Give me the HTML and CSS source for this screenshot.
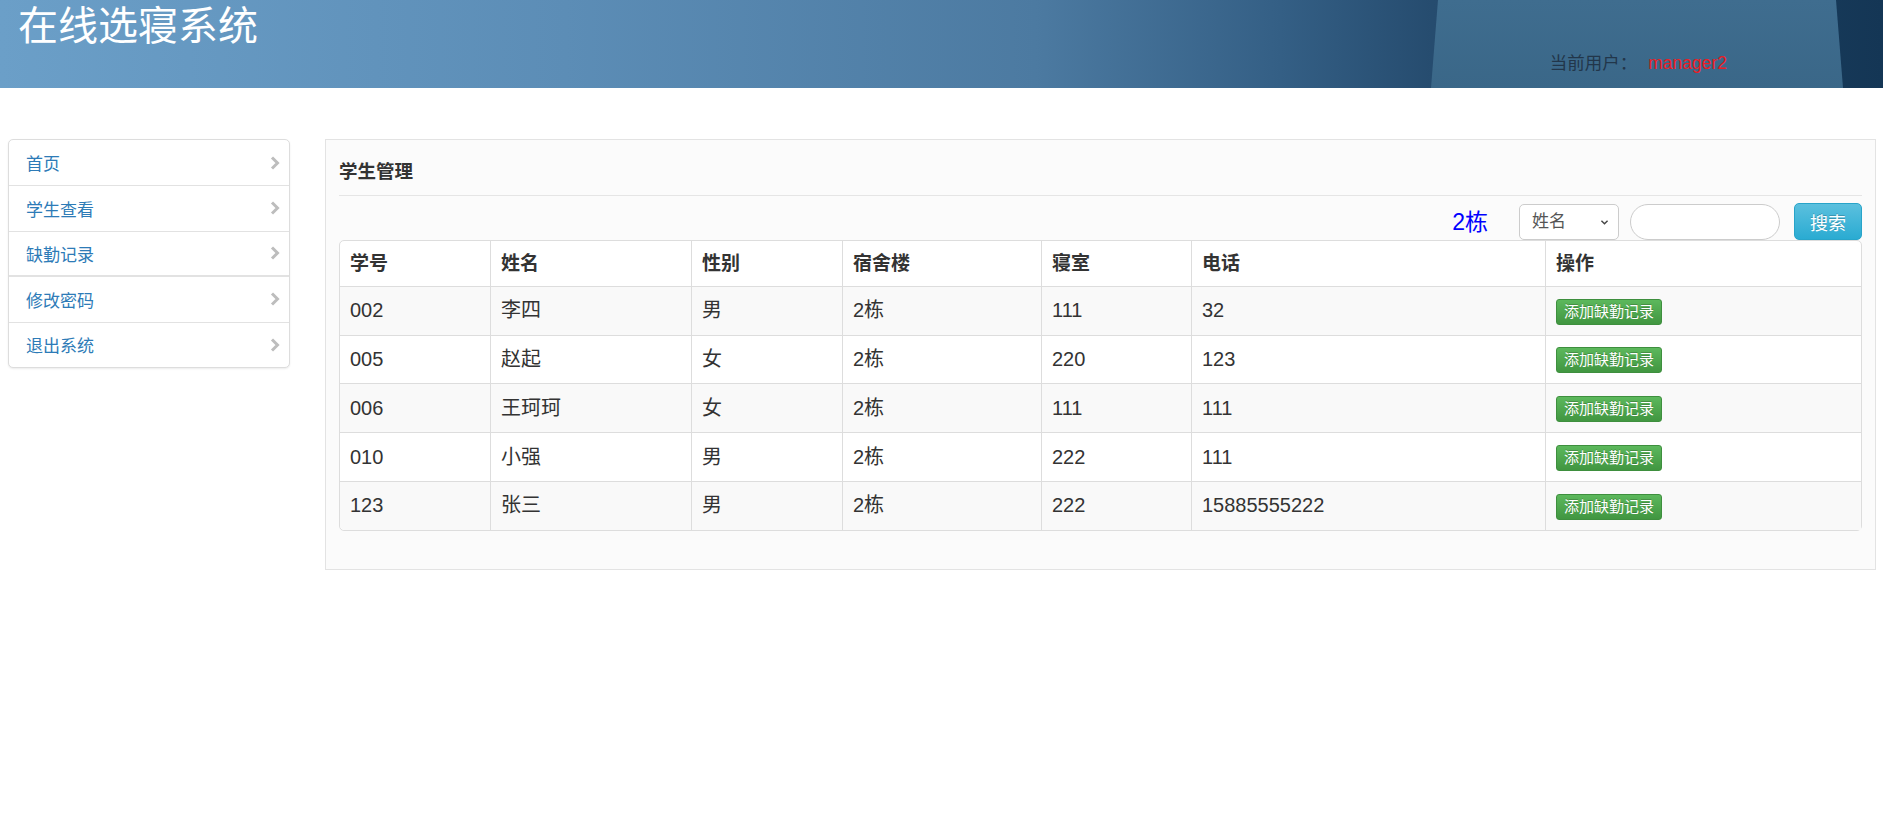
FILE: index.html
```html
<!DOCTYPE html>
<html lang="zh-CN">

<head>
    <meta charset="UTF-8">
    <meta name="viewport" content="width=device-width, initial-scale=1.0">
    <title>在线选寝系统</title>
    <link rel="stylesheet" href="styles.css">
</head>

<body>
    <header class="top">
        <div class="top-panel"></div>
        <h1 class="brand">在线选寝系统</h1>
        <div class="user">当前用户： <span class="user-name">manager2</span></div>
    </header>

    <div class="layout">
        <ul class="side-menu">
            <li><a href="#">首页</a><svg class="chev" viewBox="0 0 10 14"><path d="M2 1.5 L7.5 7 L2 12.5" /></svg></li>
            <li><a href="#">学生查看</a><svg class="chev" viewBox="0 0 10 14"><path d="M2 1.5 L7.5 7 L2 12.5" /></svg></li>
            <li class="group-end"><a href="#">缺勤记录</a><svg class="chev" viewBox="0 0 10 14"><path d="M2 1.5 L7.5 7 L2 12.5" /></svg></li>
            <li><a href="#">修改密码</a><svg class="chev" viewBox="0 0 10 14"><path d="M2 1.5 L7.5 7 L2 12.5" /></svg></li>
            <li><a href="#">退出系统</a><svg class="chev" viewBox="0 0 10 14"><path d="M2 1.5 L7.5 7 L2 12.5" /></svg></li>
        </ul>

        <div class="panel">
            <h3 class="panel-title">学生管理</h3>
            <div class="toolbar">
                <span class="building">2栋</span>
                <div class="select-wrap">
                    <select class="field">
                        <option>姓名</option>
                        <option>学号</option>
                    </select>
                    <svg class="select-arrow" viewBox="0 0 10 8"><path d="M1.5 2 L5 5.5 L8.5 2" /></svg>
                </div>
                <input type="text" class="search-input">
                <button class="btn-info">搜索</button>
            </div>

            <table class="grid">
                <colgroup>
                    <col class="c-id">
                    <col class="c-name">
                    <col class="c-sex">
                    <col class="c-bld">
                    <col class="c-room">
                    <col class="c-tel">
                    <col class="c-op">
                </colgroup>
                <thead>
                    <tr>
                        <th>学号</th><th>姓名</th><th>性别</th><th>宿舍楼</th><th>寝室</th><th>电话</th><th>操作</th>
                    </tr>
                </thead>
                <tbody>
                    <tr>
                        <td>002</td><td>李四</td><td>男</td><td>2栋</td><td>111</td><td>32</td>
                        <td><button class="btn-success">添加缺勤记录</button></td>
                    </tr>
                    <tr>
                        <td>005</td><td>赵起</td><td>女</td><td>2栋</td><td>220</td><td>123</td>
                        <td><button class="btn-success">添加缺勤记录</button></td>
                    </tr>
                    <tr>
                        <td>006</td><td>王珂珂</td><td>女</td><td>2栋</td><td>111</td><td>111</td>
                        <td><button class="btn-success">添加缺勤记录</button></td>
                    </tr>
                    <tr>
                        <td>010</td><td>小强</td><td>男</td><td>2栋</td><td>222</td><td>111</td>
                        <td><button class="btn-success">添加缺勤记录</button></td>
                    </tr>
                    <tr>
                        <td>123</td><td>张三</td><td>男</td><td>2栋</td><td>222</td><td>15885555222</td>
                        <td><button class="btn-success">添加缺勤记录</button></td>
                    </tr>
                </tbody>
            </table>
        </div>
    </div>
</body>

</html>
```

FILE: styles.css
```css
body {
    margin: 0;
    background: #fff;
    color: #333;
    font-family: "Liberation Sans", "Noto Sans CJK SC", sans-serif;
    font-size: 17px;
}

/* header */

.top {
    position: relative;
    height: 88px;
    display: flex;
    justify-content: space-between;
    overflow: hidden;
    background: linear-gradient(90deg, #6b9fc8 0%, #5c8db6 30%, #4c7aa1 55%, #345f85 68%, #264c6f 76%, #143655 100%);
}

.top-panel {
    position: absolute;
    left: 1431px;
    top: 0;
    width: 412px;
    height: 88px;
    background: linear-gradient(180deg, #3f6d8f, #3a6788);
    clip-path: polygon(7px 0, 405px 0, 412px 100%, 0 100%);
}

.brand {
    position: relative;
    margin: 0;
    padding: 0 0 0 18px;
    color: #fff;
    font-size: 40px;
    font-weight: normal;
    line-height: 52px;
}

.user {
    position: relative;
    align-self: flex-end;
    margin-right: 156px;
    padding-bottom: 14px;
    color: #22364a;
    font-size: 17.5px;
    line-height: 22px;
}

.user-name {
    margin-left: 6px;
    color: #ec1c24;
}

/* layout */

.layout {
    display: flex;
    align-items: flex-start;
    gap: 35px;
    padding: 51px 7px 0 8px;
}

.side-menu {
    width: 284px;
    margin: 0;
    padding: 0;
    list-style: none;
    background: #fff;
    border: 1px solid #ddd;
    border-radius: 5px;
    box-shadow: 0 1px 2px rgba(0, 0, 0, .08);
}

.side-menu li {
    display: flex;
    align-items: center;
    justify-content: space-between;
    height: 44.5px;
    padding: 0 9px 0 17px;
    border-top: 1px solid #e2e2e2;
}

.side-menu li:first-child {
    height: 45px;
    border-top: 0;
}

.side-menu li.group-end {
    border-bottom: 1px solid #e2e2e2;
    height: 43.5px;
}

.side-menu a {
    color: #2d7bb7;
    text-decoration: none;
    font-size: 17px;
}

.chev {
    width: 10px;
    height: 14px;
}

.chev path {
    fill: none;
    stroke: #bdbdbd;
    stroke-width: 3;
}

/* panel */

.panel {
    flex: 1;
    padding: 19px 13px 38px;
    background: #fbfbfb;
    border: 1px solid #e3e3e3;
}

.panel-title {
    margin: 0;
    padding-bottom: 10px;
    border-bottom: 1px solid #e5e5e5;
    font-size: 18.5px;
    line-height: 26px;
    color: #333;
}

.toolbar {
    display: flex;
    align-items: center;
    justify-content: flex-end;
    height: 37px;
    margin-top: 7px;
}

.building {
    margin-right: 31px;
    color: #0000ff;
    font-size: 23px;
    line-height: 30px;
}

.select-wrap {
    position: relative;
    margin-right: 11px;
}

.field {
    appearance: none;
    width: 100px;
    height: 36px;
    padding: 0 12px;
    background: #fff;
    border: 1px solid #ccc;
    border-radius: 5px;
    color: #555;
    font-family: inherit;
    font-size: 17px;
}

.select-arrow {
    position: absolute;
    right: 10px;
    top: 15px;
    width: 9px;
    height: 7px;
}

.select-arrow path {
    fill: none;
    stroke: #444;
    stroke-width: 1.6;
}

.search-input {
    box-sizing: border-box;
    width: 150px;
    height: 36px;
    margin: 0 14px 0 0;
    background: #fff;
    border: 1px solid #ccc;
    border-radius: 18px;
}

.btn-info {
    width: 68px;
    height: 37px;
    padding: 0;
    color: #fff;
    font-family: inherit;
    font-size: 18px;
    background: linear-gradient(180deg, #5bc0de 0%, #2aabd2 100%);
    border: 1px solid #28a4c9;
    border-radius: 5px;
    text-shadow: 0 -1px 0 rgba(0, 0, 0, .2);
}

/* table */

.grid {
    width: 100%;
    table-layout: fixed;
    border-collapse: separate;
    border-spacing: 0;
    background: #fff;
    border: 1px solid #ddd;
    border-radius: 5px;
    font-size: 20px;
}

.c-id { width: 150px; }
.c-name { width: 201px; }
.c-sex { width: 151px; }
.c-bld { width: 199px; }
.c-room { width: 150px; }
.c-tel { width: 354px; }
.c-op { width: 316px; }

.grid th,
.grid td {
    padding: 10px 10px;
    line-height: 27px;
    text-align: left;
    vertical-align: middle;
    border-left: 1px solid #ddd;
    border-top: 1px solid #ddd;
}

.grid th {
    padding: 9px 10px;
    border-top: 0;
    font-size: 19px;
}

.grid th:first-child,
.grid td:first-child {
    border-left: 0;
}

.grid tbody tr:nth-child(odd) td {
    background: #f9f9f9;
}

.grid tbody tr:last-child td:first-child {
    border-bottom-left-radius: 5px;
}

.btn-success {
    vertical-align: middle;
    padding: 1px 7px;
    color: #fff;
    font-family: inherit;
    font-size: 15px;
    line-height: 22px;
    background: linear-gradient(180deg, #5cb85c 0%, #419641 100%);
    border: 1px solid #3e8f3e;
    border-radius: 3px;
    text-shadow: 0 -1px 0 rgba(0, 0, 0, .2);
}
```
